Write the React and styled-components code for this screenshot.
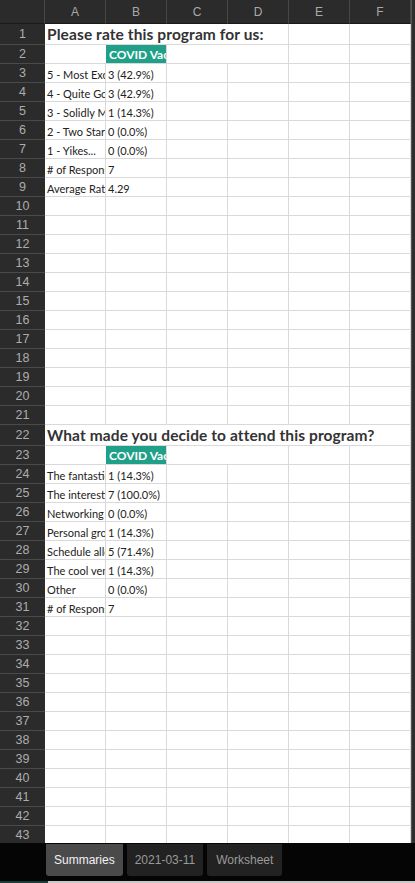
import React from 'react';
import styled, { createGlobalStyle, css } from 'styled-components';

const Global = createGlobalStyle`
  html, body { margin: 0; padding: 0; background: #050505; }
  body { font-family: Lato, "Liberation Sans", sans-serif; }
`;

const Screen = styled.div`
  width: 415px;
  height: 883px;
  display: flex;
  flex-direction: column;
  background: #050505;
  overflow: hidden;
`;

const Sheet = styled.div`
  display: flex;
  height: 843px;
  overflow: hidden;
`;

const Grid = styled.div`
  width: 411px;
  display: flex;
  flex-direction: column;
  background: #fff;
`;

const ScrollStrip = styled.div`
  width: 4px;
  background: #2e2e2e;
  border-left: 1px solid #555;
`;

const Row = styled.div`
  display: grid;
  grid-template-columns: 45px repeat(6, 61px);
  height: ${p => p.h}px;
  flex: none;
`;

const ColHead = styled.div`
  background: #2b2b2b;
  color: #a9a9a9;
  font-family: "Liberation Sans", Arial, sans-serif;
  font-size: 12px;
  display: flex;
  align-items: center;
  justify-content: center;
  border-right: 1px solid #474747;
  border-bottom: 1px solid #1a1a1a;
  box-sizing: border-box;
`;

const RowHead = styled.div`
  background: #2b2b2b;
  color: #adadad;
  font-family: "Liberation Sans", Arial, sans-serif;
  font-size: 12.5px;
  display: flex;
  align-items: center;
  justify-content: center;
  border-bottom: 1px solid #4a4a4a;
  box-sizing: border-box;
`;

const Cell = styled.div`
  box-sizing: border-box;
  border-bottom: 1px solid #d9d9d9;
  border-right: ${p => (p.open ? 'none' : '1px solid #d9d9d9')};
  font-size: 11px;
  color: #222;
  white-space: nowrap;
  overflow: ${p => (p.spill ? 'visible' : 'hidden')};
  display: flex;
  align-items: flex-end;
  padding: 0 0 1px 2px;
  position: relative;
  z-index: ${p => (p.spill ? 1 : 0)};
  ${p =>
    p.teal &&
    css`
      background: #21a089;
      color: #fff;
      font-weight: 700;
      font-size: 12px;
      padding-left: 3px;
    `}
`;

const Title = styled.span`
  font-size: 15.5px;
  font-weight: 700;
  color: #333;
  letter-spacing: 0.1px;
`;

const TabBar = styled.div`
  flex: 1;
  display: flex;
  flex-direction: column;
`;

const Tabs = styled.div`
  display: flex;
  gap: 4px;
  padding: 1px 0 0 46px;
  height: 33px;
`;

const Tab = styled.div`
  height: 32px;
  box-sizing: border-box;
  padding: 0 ${p => p.pad}px;
  display: flex;
  align-items: center;
  border-radius: 0 0 3px 3px;
  font-family: "Liberation Sans", Arial, sans-serif;
  font-size: 12px;
  background: ${p => (p.active ? '#4a4a4a' : '#222')};
  color: ${p => (p.active ? '#f2f2f2' : '#9a9a9a')};
`;

const BottomEdge = styled.div`
  margin-top: auto;
  height: 2px;
  display: flex;
`;

const EdgePart = styled.div`
  width: ${p => p.w}px;
  flex: ${p => (p.w ? 'none' : 1)};
  background: ${p => p.c};
`;

const cols = ['A', 'B', 'C', 'D', 'E', 'F'];

const rows = {
  1: { title: 'Please rate this program for us:', h: 21 },
  2: { header: true },
  3: ['5 - Most Excellent', '3 (42.9%)'],
  4: ['4 - Quite Good', '3 (42.9%)'],
  5: ['3 - Solidly Meh', '1 (14.3%)'],
  6: ['2 - Two Stars', '0 (0.0%)'],
  7: ['1 - Yikes...', '0 (0.0%)'],
  8: ['# of Responses', '7'],
  9: ['Average Rating', '4.29'],
  22: { title: 'What made you decide to attend this program?', h: 21 },
  23: { header: true },
  24: ['The fantastic speakers', '1 (14.3%)'],
  25: ['The interesting topic', '7 (100.0%)'],
  26: ['Networking with peers', '0 (0.0%)'],
  27: ['Personal growth', '1 (14.3%)'],
  28: ['Schedule allowed it', '5 (71.4%)'],
  29: ['The cool venue', '1 (14.3%)'],
  30: ['Other', '0 (0.0%)'],
  31: ['# of Responses', '7'],
};

function SheetRow({ n }) {
  const r = rows[n];
  if (r && r.title) {
    return (
      <Row h={r.h}>
        <RowHead>{n}</RowHead>
        <Cell open spill>
          <Title>{r.title}</Title>
        </Cell>
        <Cell open />
        <Cell open />
        <Cell open={n === 22} />
        <Cell open={n === 22} />
        <Cell />
      </Row>
    );
  }
  if (r && r.header) {
    return (
      <Row h={19}>
        <RowHead>{n}</RowHead>
        <Cell open />
        <Cell teal>COVID Vaccine</Cell>
        <Cell open />
        <Cell />
        <Cell />
        <Cell />
      </Row>
    );
  }
  return (
    <Row h={19}>
      <RowHead>{n}</RowHead>
      {cols.map((c, i) => (
        <Cell key={c}>{Array.isArray(r) ? r[i] : null}</Cell>
      ))}
    </Row>
  );
}

export default function App() {
  return (
    <Screen>
      <Global />
      <Sheet>
        <Grid>
          <Row h={24}>
            <ColHead />
            {cols.map(c => (
              <ColHead key={c}>{c}</ColHead>
            ))}
          </Row>
          {Array.from({ length: 43 }, (_, i) => (
            <SheetRow key={i} n={i + 1} />
          ))}
        </Grid>
        <ScrollStrip />
      </Sheet>
      <TabBar>
        <Tabs>
          <Tab active pad={8}>Summaries</Tab>
          <Tab pad={8}>2021-03-11</Tab>
          <Tab pad={9}>Worksheet</Tab>
        </Tabs>
        <BottomEdge>
          <EdgePart w={48} c="#1d3b3a" />
          <EdgePart c="#c8c8c8" />
        </BottomEdge>
      </TabBar>
    </Screen>
  );
}
